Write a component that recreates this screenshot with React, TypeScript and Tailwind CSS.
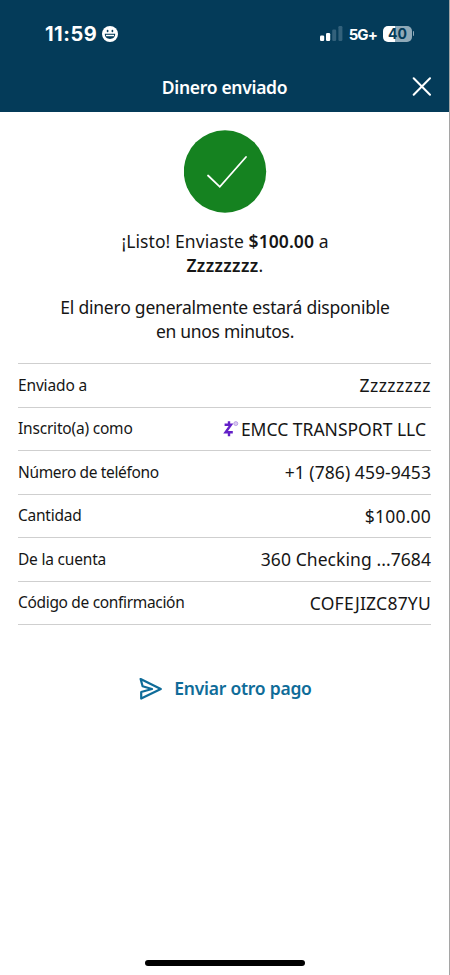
import React, { FC, ReactNode } from "react";

interface DetailRowProps {
	label: string;
	children: ReactNode;
	labelClass?: string;
	valueClass?: string;
}

const ZelleMark = () => (
	<svg width="18" height="18" viewBox="0 0 18 18" className="shrink-0" aria-hidden="true">
		<g fill="none" stroke="#6320c8" strokeWidth="2.4">
			<path d="M1.6 4.8H8L2.6 12.2H9.8" />
			<path d="M6 1.2V5M6 12.4V16.2" />
		</g>
		<circle cx="12.8" cy="3.6" r="2" fill="#d9c9f0" stroke="#b193e0" strokeWidth="0.8" />
	</svg>
);

const DetailRow: FC<DetailRowProps> = ({ label, children, labelClass = "", valueClass = "" }) => (
	<div className="flex h-[43.5px] items-center justify-between border-b border-[#cfcfcf]">
		<dt className={`text-[15.5px] whitespace-nowrap ${labelClass}`}>{label}</dt>
		<dd className={`flex items-center text-[17.5px] whitespace-nowrap ${valueClass}`}>{children}</dd>
	</div>
);

const StatusBar = () => (
	<div className="flex h-[67px] items-center justify-between pr-[35px] pl-[45px] font-['Inter',sans-serif] text-white">
		<div className="flex items-center gap-[5px]">
			<span className="text-[20px] leading-none font-bold tracking-[0.5px]">11:59</span>
			<svg width="16" height="16" viewBox="0 0 16 16" aria-hidden="true">
				<circle cx="8" cy="8" r="8" fill="#fff" />
				<g fill="#043b59">
					<ellipse cx="5.6" cy="5" rx="0.9" ry="1.3" />
					<ellipse cx="10.4" cy="5" rx="0.9" ry="1.3" />
					<path d="M2.8 7.8H13.2C13.2 11.2 10.8 13 8 13S2.8 11.2 2.8 7.8Z" />
				</g>
				<path d="M4 8.8H12V10.2H4Z" fill="#fff" />
			</svg>
		</div>
		<div className="flex items-center">
			<svg width="23" height="15" viewBox="0 0 23 15" className="-mt-px" aria-hidden="true">
				<rect x="0" y="9.5" width="4.2" height="5.5" rx="1.2" fill="#fff" />
				<rect x="6" y="7" width="4.2" height="8" rx="1.2" fill="#fff" />
				<rect x="12.2" y="3.5" width="4" height="11.5" rx="1.2" fill="#33617b" />
				<rect x="18.4" y="0" width="4" height="15" rx="1.2" fill="#33617b" />
			</svg>
			<span className="ml-[6px] pt-px text-[15px] leading-none font-bold tracking-[-0.9px]">5G+</span>
			<div className="ml-[6px] flex h-4 w-[29px] items-center justify-center rounded-[5px] bg-linear-to-r from-white from-42% to-[#8fa9b8] to-42% pt-px text-[14px] leading-none font-bold text-[#043b59]">
				40
			</div>
			<span className="ml-px h-[5px] w-[1px] rounded-r-full bg-[#8fa9b8]" />
		</div>
	</div>
);

const App: FC = () => {
	return (
		<div className="flex h-[975px] w-[450px] flex-col border-r border-[#a5a5a5] bg-white font-['Noto_Sans',sans-serif] text-[#161616]">
			<header className="h-28 bg-[#043b59]">
				<StatusBar />
				<div className="flex h-10 items-center justify-between pr-[17px] pl-[37px] text-white">
					<h1 className="flex-1 text-center text-[17.5px] font-semibold tracking-[-0.3px]">Dinero enviado</h1>
					<button type="button" aria-label="Cerrar">
						<svg width="20" height="20" viewBox="0 0 20 20" fill="none" stroke="#fff" strokeWidth="2" strokeLinecap="round">
							<path d="M1.7 1.3L18 17.7M18 1.3L1.7 17.7" />
						</svg>
					</button>
				</div>
			</header>

			<main className="flex flex-col pr-[17px] pl-[18px]">
				<svg className="mx-auto mt-[18px]" width="83" height="83" viewBox="0 0 83 83" aria-hidden="true">
					<circle cx="41" cy="41.5" r="41.2" fill="#158220" />
					<path d="M24 45.5L35.8 56.8L62 27" fill="none" stroke="#fff" strokeWidth="1.8" strokeLinecap="round" />
				</svg>
				<p className="mt-[16px] text-center text-[17.5px] leading-6">
					<span className="block tracking-[0.08px]">
						¡Listo! Enviaste <b className="font-semibold">$100.00</b> a
					</span>
					<span className="block tracking-[0.35px]">
						<b className="font-semibold">Zzzzzzzz</b>.
					</span>
				</p>
				<p className="mt-[18px] text-center text-[17.5px] leading-6">
					<span className="block tracking-[-0.22px]">El dinero generalmente estará disponible</span>
					<span className="block tracking-[-0.3px]">en unos minutos.</span>
				</p>
				<dl className="mt-[20px] mr-px border-t border-[#cfcfcf]">
					<DetailRow label="Enviado a" labelClass="tracking-[-0.15px]" valueClass="tracking-[0.5px]">
						Zzzzzzzz
					</DetailRow>
					<DetailRow label="Inscrito(a) como" labelClass="tracking-[-0.2px]" valueClass="pr-[5px]">
						<ZelleMark />
						EMCC TRANSPORT LLC
					</DetailRow>
					<DetailRow label="Número de teléfono" labelClass="tracking-[-0.36px]" valueClass="tracking-[0.06px]">
						+1 (786) 459-9453
					</DetailRow>
					<DetailRow label="Cantidad" labelClass="tracking-[-0.25px]" valueClass="tracking-[0.2px]">
						$100.00
					</DetailRow>
					<DetailRow label="De la cuenta" labelClass="tracking-[-0.2px]" valueClass="tracking-[0.07px]">
						360 Checking ...7684
					</DetailRow>
					<DetailRow label="Código de confirmación" labelClass="tracking-[-0.33px]" valueClass="tracking-[0.22px]">
						COFEJIZC87YU
					</DetailRow>
				</dl>
				<button
					type="button"
					className="mx-auto mt-[51px] flex h-6 items-center gap-3 text-[17.5px] font-semibold tracking-[-0.25px] text-[#0f6c99]"
				>
					<svg width="24" height="24" viewBox="0 0 24 24" fill="none" stroke="#0f6c99" strokeWidth="2.2" strokeLinejoin="round">
						<path d="M2.6 3L22.8 13L3.2 22.5V16L14 13L4.6 10.2Z" />
					</svg>
					Enviar otro pago
				</button>
			</main>
			<div className="mx-auto mt-auto mb-[9px] h-[6px] w-40 rounded-full bg-black" />
		</div>
	);
};

export default App;
